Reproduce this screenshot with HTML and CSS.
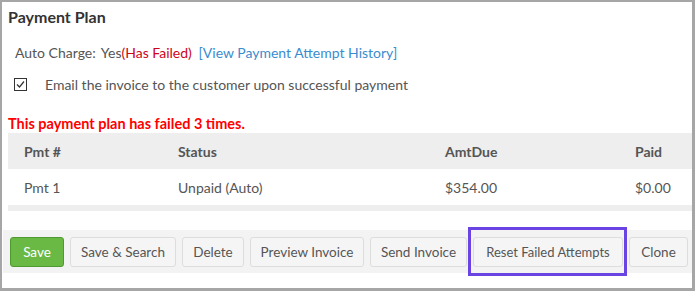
FILE: index.html
```html
<!DOCTYPE html>
<html>
<head>
<meta charset="utf-8">
<link rel="stylesheet" href="styles.css">
</head>
<body>
<div class="frame">
  <h2 class="title">Payment Plan</h2>
  <div class="auto-line">
    <span class="label">Auto Charge:</span>
    <span class="yes">Yes</span><span class="failed">(Has Failed)</span>
    <a class="history">[View Payment Attempt History]</a>
  </div>
  <div class="email-line">
    <span class="checkbox">
      <svg width="13" height="13" viewBox="0 0 13 13"><rect x="0.5" y="0.5" width="12" height="12" fill="#fff" stroke="#333" stroke-width="1"/><path d="M3 6.5 L5.5 9 L10 3.5" fill="none" stroke="#333" stroke-width="1.2"/></svg>
    </span>
    <span class="email-text">Email the invoice to the customer upon successful payment</span>
  </div>
  <div class="fail-msg">This payment plan has failed 3 times.</div>
  <div class="table">
    <div class="row head">
      <div class="cell">Pmt #</div>
      <div class="cell">Status</div>
      <div class="cell">AmtDue</div>
      <div class="cell">Paid</div>
    </div>
    <div class="row">
      <div class="cell">Pmt 1</div>
      <div class="cell">Unpaid (Auto)</div>
      <div class="cell">$354.00</div>
      <div class="cell">$0.00</div>
    </div>
    <div class="foot"></div>
  </div>
  <div class="bar">
    <button class="btn btn-save">Save</button>
    <button class="btn btn-search">Save &amp; Search</button>
    <button class="btn btn-delete">Delete</button>
    <button class="btn btn-preview">Preview Invoice</button>
    <button class="btn btn-send">Send Invoice</button>
    <button class="btn btn-reset">Reset Failed Attempts</button>
    <button class="btn btn-clone">Clone</button>
  </div>
</div>
</body>
</html>
```
FILE: styles.css
```css
* { box-sizing: border-box; }
body {
  margin: 0;
  font-family: Lato, "Open Sans", sans-serif;
  color: #555;
  font-size: 14px;
}
.frame {
  width: 695px;
  height: 291px;
  border-style: solid;
  border-color: #a6a6a6;
  border-width: 2px 3px 3px 2px;
  background: #fff;
  overflow: hidden;
}
.title {
  margin: 0;
  padding: 6px 0 0 6px;
  height: 36px;
  font-size: 16px;
  font-weight: bold;
  color: #333;
  line-height: 18px;
}
.auto-line {
  padding-left: 13px;
  height: 30px;
  line-height: 30px;
}
.auto-line .label { margin-right: 2px; }
.failed { color: #d0021b; }
.history { color: #3a8ccf; margin-left: 3px; }
.email-line {
  display: flex;
  align-items: center;
  height: 32px;
  padding-left: 12px;
}
.checkbox { display: flex; width: 13px; height: 13px; margin-right: 18px; }
.fail-msg {
  margin-top: 15px;
  padding-left: 6px;
  color: #f00;
  font-weight: bold;
  font-size: 14.5px;
  height: 18px;
  line-height: 18px;
}
.table { margin-left: 6px; }
.row {
  display: grid;
  grid-template-columns: 154px 267px 190px 1fr;
  height: 36px;
  align-items: center;
}
.row.head { background: #eee; font-weight: bold; }
.cell { padding-left: 16px; }
.foot { height: 6px; background: #eee; }
.bar {
  margin: 19px 0 0 1px;
  background: #f3f3f3;
  height: 43px;
  padding: 7px 0 0 7px;
  display: flex;
  gap: 6px;
}
.btn {
  flex: none;
  white-space: nowrap;
  height: 30px;
  padding: 0;
  text-align: center;
  font-family: inherit;
  font-size: 13.5px;
  color: #555;
  background: #f5f5f5;
  border: 1px solid #ddd;
  border-radius: 3px;
}
.btn-save {
  width: 54px;
  background: #6bb945;
  border-color: #4f9a30;
  color: #fff;
}
.btn-search { width: 106px; }
.btn-delete { width: 62px; }
.btn-preview { width: 114px; }
.btn-send { width: 97px; }
.btn-reset { width: 150px; position: relative; font-size: 13px; }
.btn-clone { width: 59px; }
.btn-reset::after {
  content: "";
  position: absolute;
  left: -6px;
  right: -5px;
  top: -11px;
  bottom: -10px;
  border: 3px solid #6a44e3;
}
```
